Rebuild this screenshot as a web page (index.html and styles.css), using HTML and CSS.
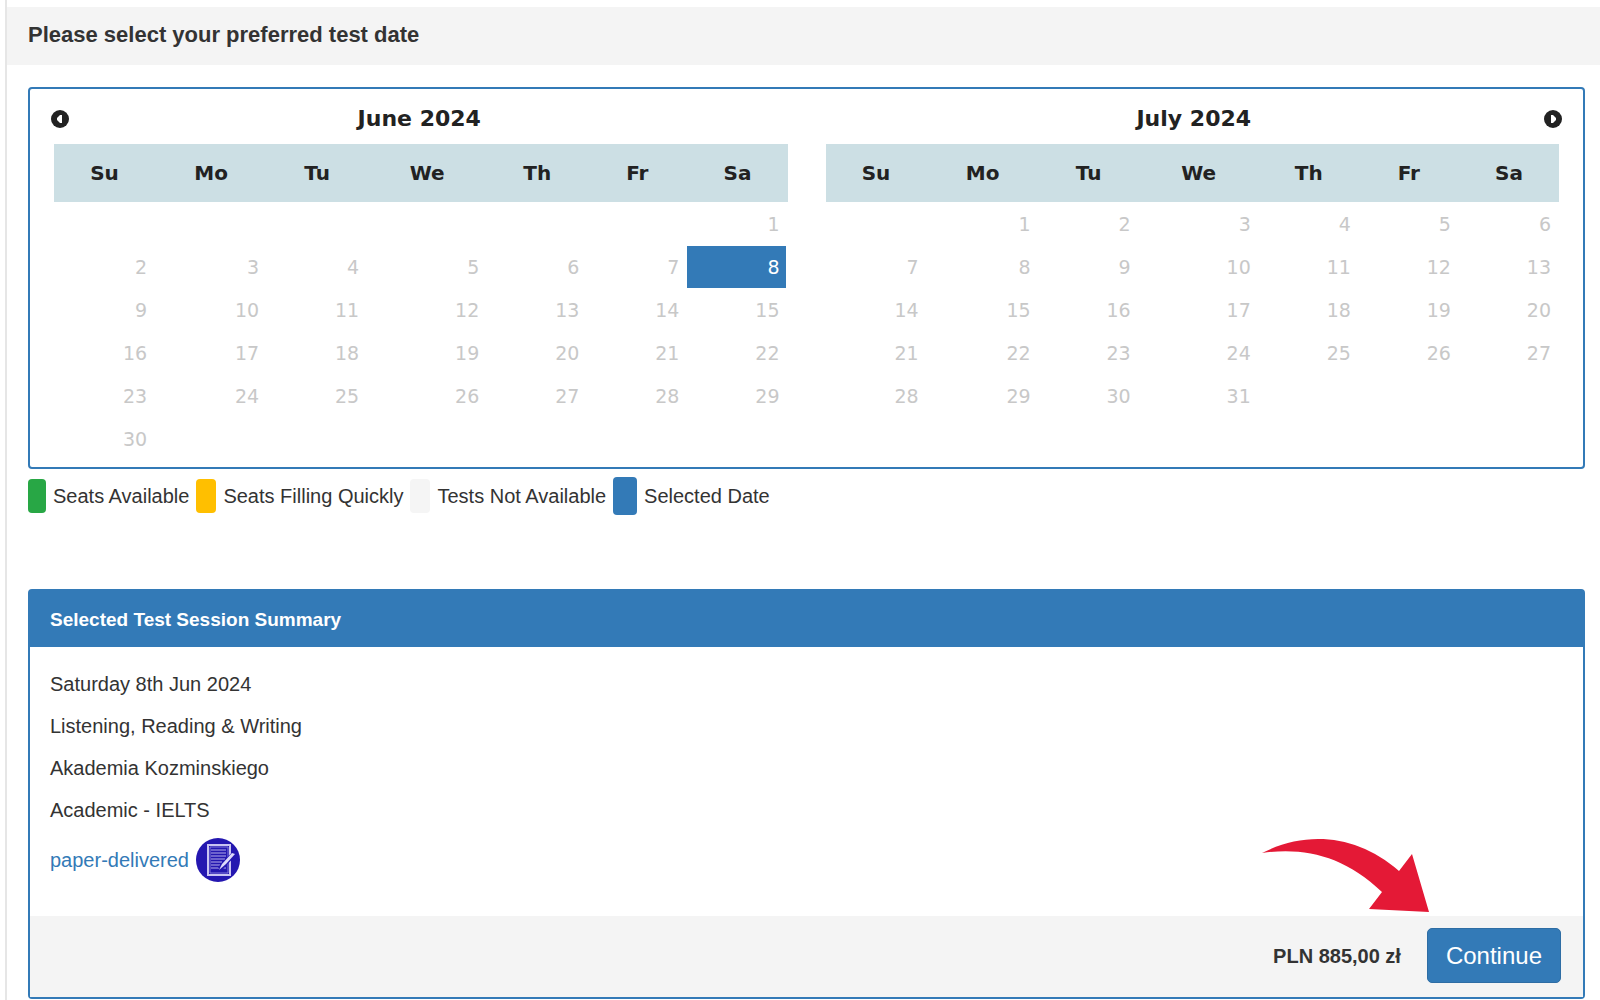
FILE: index.html
```html
<!DOCTYPE html>
<html lang="en">
<head>
<meta charset="utf-8">
<title>Select test date</title>
<link rel="stylesheet" href="styles.css">
</head>
<body>
<main class="page">
  <h1 class="page-title">Please select your preferred test date</h1>
  <div class="content">
    <section class="calendar" aria-label="Test date calendar">
      <div class="month">
        <div class="month-head">
          <button class="nav" type="button" aria-label="Previous month"><svg viewBox="0 0 18 18" width="18" height="18"><circle cx="9" cy="9" r="9" fill="#222"/><path d="M11 5v8H9L6 10V8l3-3z" fill="#fff"/></svg></button>
          <h2 class="month-name">June 2024</h2>
          <span class="nav-space"></span>
        </div>
        <table class="days">
          <colgroup><col class="c-su"><col class="c-mo"><col class="c-day"><col class="c-we"><col class="c-day"><col class="c-day"><col class="c-day"></colgroup>
          <thead><tr><th>Su</th><th>Mo</th><th>Tu</th><th>We</th><th>Th</th><th>Fr</th><th>Sa</th></tr></thead>
          <tbody>
            <tr><td></td><td></td><td></td><td></td><td></td><td></td><td>1</td></tr>
            <tr><td>2</td><td>3</td><td>4</td><td>5</td><td>6</td><td>7</td><td class="selected"><a href="#summary">8</a></td></tr>
            <tr><td>9</td><td>10</td><td>11</td><td>12</td><td>13</td><td>14</td><td>15</td></tr>
            <tr><td>16</td><td>17</td><td>18</td><td>19</td><td>20</td><td>21</td><td>22</td></tr>
            <tr><td>23</td><td>24</td><td>25</td><td>26</td><td>27</td><td>28</td><td>29</td></tr>
            <tr><td>30</td><td></td><td></td><td></td><td></td><td></td><td></td></tr>
          </tbody>
        </table>
      </div>
      <div class="month">
        <div class="month-head">
          <span class="nav-space"></span>
          <h2 class="month-name">July 2024</h2>
          <button class="nav nav-next" type="button" aria-label="Next month"><svg viewBox="0 0 18 18" width="18" height="18"><circle cx="9" cy="9" r="9" fill="#222"/><path d="M7 5v8h2l3-3V8L9 5z" fill="#fff"/></svg></button>
        </div>
        <table class="days">
          <colgroup><col class="c-su"><col class="c-mo"><col class="c-day"><col class="c-we"><col class="c-day"><col class="c-day"><col class="c-day"></colgroup>
          <thead><tr><th>Su</th><th>Mo</th><th>Tu</th><th>We</th><th>Th</th><th>Fr</th><th>Sa</th></tr></thead>
          <tbody>
            <tr><td></td><td>1</td><td>2</td><td>3</td><td>4</td><td>5</td><td>6</td></tr>
            <tr><td>7</td><td>8</td><td>9</td><td>10</td><td>11</td><td>12</td><td>13</td></tr>
            <tr><td>14</td><td>15</td><td>16</td><td>17</td><td>18</td><td>19</td><td>20</td></tr>
            <tr><td>21</td><td>22</td><td>23</td><td>24</td><td>25</td><td>26</td><td>27</td></tr>
            <tr><td>28</td><td>29</td><td>30</td><td>31</td><td></td><td></td><td></td></tr>
          </tbody>
        </table>
      </div>
    </section>
    <ul class="legend">
      <li><span class="swatch available"></span>Seats Available</li>
      <li><span class="swatch filling"></span>Seats Filling Quickly</li>
      <li><span class="swatch none"></span>Tests Not Available</li>
      <li><span class="swatch chosen"></span>Selected Date</li>
    </ul>
    <section class="summary" id="summary">
      <h2 class="summary-title">Selected Test Session Summary</h2>
      <div class="summary-body">
        <p>Saturday 8th Jun 2024</p>
        <p>Listening, Reading &amp; Writing</p>
        <p>Akademia Kozminskiego</p>
        <p>Academic - IELTS</p>
        <a class="delivery" href="#paper">paper-delivered
          <svg viewBox="0 0 44 44" width="44" height="44" aria-hidden="true">
            <circle cx="22" cy="22" r="22" fill="#2417b0"/>
            <rect x="12" y="7" width="22" height="30" fill="none" stroke="#c9c3f2" stroke-width="2"/>
            <path d="M14 9h18v26H14z" fill="none" stroke="#8078d8" stroke-width="1"/>
            <path d="M15 12h15M15 15h15M15 18h15M15 21h14M15 24h11M15 27h9M15 30h8M26 30h4" stroke="#b5aeea" stroke-width="1"/>
            <path d="M38 16l-10 10-4 5" fill="none" stroke="#2417b0" stroke-width="5"/>
            <path d="M36 15l3 1-9 10-7 6 3-6z" fill="#ddd9fa"/>
          </svg>
        </a>
      </div>
      <div class="summary-foot">
        <strong class="price">PLN 885,00 zł</strong>
        <button class="continue" type="button">Continue</button>
        <svg class="pointer" viewBox="0 0 168 74" width="168" height="74" aria-hidden="true"><path d="M0 14C45-9 96-4 137 32L150 15L167 73L107 70L120 53C82 17 43 8 0 14z" fill="#e41936"/></svg>
      </div>
    </section>
  </div>
</main>
</body>
</html>
```
FILE: styles.css
```css
* { box-sizing: border-box; }
body {
  margin: 0;
  background: #fff;
  color: #333;
  font: 20px/28px "Liberation Sans", Arial, sans-serif;
}
h1, h2, p, ul { margin: 0; padding: 0; }
.page {
  margin-left: 5px;
  padding-top: 7px;
  border-left: 2px solid #e6e6e6;
  min-height: 100vh;
}
.page-title {
  padding: 14px 21px 16px;
  background: #f4f4f4;
  font-size: 22px;
  line-height: 28px;
}
.content { padding: 22px 15px 1px 21px; }
.calendar {
  display: grid;
  grid-template-columns: 1fr 1fr;
  gap: 38px;
  padding: 16px 24px 7px;
  border: 2px solid #337ab7;
  border-radius: 4px;
  font-family: "DejaVu Sans", Verdana, sans-serif;
}
.month-head {
  display: flex;
  align-items: center;
  height: 28px;
  margin-bottom: 11px;
}
.month-name {
  flex: 1;
  text-align: center;
  font-size: 22px;
  line-height: 28px;
  color: #222;
}
.nav, .nav-space { width: 18px; height: 18px; }
.nav {
  padding: 0;
  border: 0;
  background: none;
  margin-left: -3px;
}
.nav-next { margin: 0 -3px 0 0; }
.nav svg { display: block; }
.days {
  width: 100%;
  table-layout: fixed;
  border-collapse: collapse;
  font-size: 19px;
}
.c-day { width: 100px; }
.c-su { width: 101px; }
.c-mo { width: 112px; }
.c-we { width: 120px; }
.days th {
  height: 58px;
  padding: 0;
  background: #ccdfe4;
  color: #222;
  font-size: 20px;
}
.days td {
  height: 43px;
  padding: 0 8px 0 0;
  text-align: right;
  line-height: 24px;
  color: #c8c8c8;
}
.days .selected { padding: 0 2px 0 0; }
.selected a {
  display: block;
  padding: 9px 6px 9px 0;
  background: #337ab7;
  color: #fff;
  text-decoration: none;
}
.legend {
  display: flex;
  align-items: center;
  gap: 7px;
  height: 38px;
  margin-top: 8px;
  list-style: none;
}
.legend li { display: flex; align-items: center; gap: 7px; }
.swatch { width: 20px; height: 34px; border-radius: 4px; }
.available { width: 18px; background: #28a745; }
.filling { background: #ffbf00; }
.none { background: #f5f5f5; }
.chosen { width: 24px; height: 38px; background: #337ab7; }
.summary {
  margin-top: 74px;
  border: 2px solid #337ab7;
  border-radius: 4px;
}
.summary-title {
  padding: 15px 20px 13px;
  background: #337ab7;
  color: #fff;
  font-size: 19px;
  line-height: 28px;
}
.summary-body {
  display: flex;
  flex-direction: column;
  align-items: flex-start;
  gap: 14px;
  padding: 23px 20px 34px;
}
.delivery {
  display: flex;
  align-items: center;
  gap: 7px;
  color: #337ab7;
  text-decoration: none;
}
.summary-foot {
  position: relative;
  display: flex;
  align-items: center;
  justify-content: flex-end;
  gap: 26px;
  padding: 12px 22px 14px;
  background: #f4f4f4;
}
.continue {
  height: 55px;
  padding: 0 18px;
  border: 1px solid #2e6da4;
  border-radius: 5px;
  background: #337ab7;
  color: #fff;
  font: 24px/30px "Liberation Sans", Arial, sans-serif;
}
.pointer { position: absolute; right: 153px; top: -77px; }
```
